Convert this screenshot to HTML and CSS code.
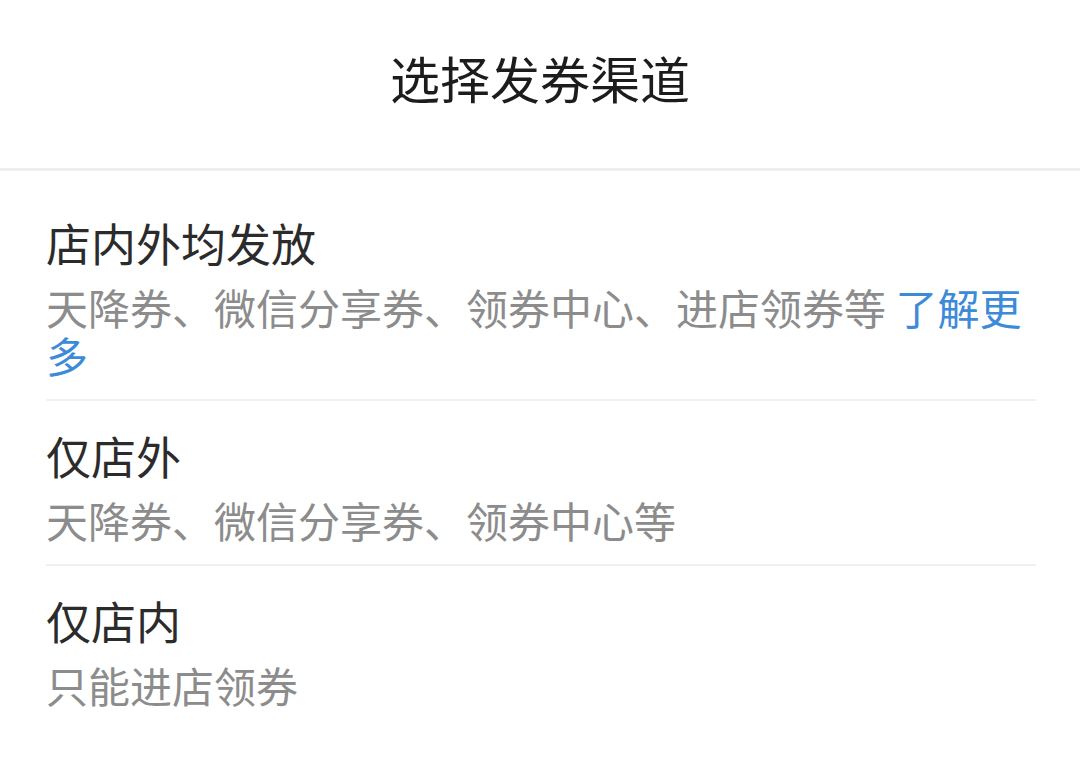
FILE: index.html
```html
<!DOCTYPE html>
<html lang="zh-CN">
<head>
    <meta charset="UTF-8">
    <meta name="viewport" content="width=device-width, initial-scale=1.0">
    <title>选择发券渠道</title>
    <link rel="stylesheet" href="styles.css">
</head>
<body>

    <div class="header">
        <h1>选择发券渠道</h1>
    </div>

    <ul class="channel-list">
        <li class="channel-item">
            <div class="channel-title">店内外均发放</div>
            <p class="channel-desc">天降券、微信分享券、领券中心、进店领券等 <a href="#" class="more-link">了解更多</a></p>
        </li>
        <li class="channel-item">
            <div class="channel-title">仅店外</div>
            <p class="channel-desc">天降券、微信分享券、领券中心等</p>
        </li>
        <li class="channel-item">
            <div class="channel-title">仅店内</div>
            <p class="channel-desc">只能进店领券</p>
        </li>
    </ul>

</body>
</html>
```

FILE: styles.css
```css
:root {
    --title-color: #1c1c1c;
    --text-color: #2b2b2b;
    --desc-color: #8c8c8c;
    --link-color: #3d8ad8;
    --border-color: #f0f0f0;
}

body {
    margin: 0;
    background-color: #ffffff;
    font-family: "Noto Sans CJK SC", "Noto Sans", sans-serif;
}

.header {
    height: 154px;
    padding-bottom: 14px;
    display: flex;
    align-items: center;
    justify-content: center;
    border-bottom: 3px solid #eeeeee;
}

h1 {
    margin: 0;
    font-size: 50px;
    font-weight: 400;
    line-height: 60px;
    color: var(--title-color);
}

/* -- daftar channel -- */
.channel-list {
    list-style: none;
    margin: 0;
    padding: 17px 44px 0 46px;
}

.channel-item {
    padding: 28px 0 20px;
    border-bottom: 2px solid var(--border-color);
}

.channel-item:last-child {
    border-bottom: none;
}

.channel-title {
    font-size: 45px;
    line-height: 54px;
    color: var(--text-color);
}

.channel-desc {
    margin: 13px 0 0;
    font-size: 42px;
    line-height: 48px;
    color: var(--desc-color);
}

.more-link {
    color: var(--link-color);
    text-decoration: none;
}
```
